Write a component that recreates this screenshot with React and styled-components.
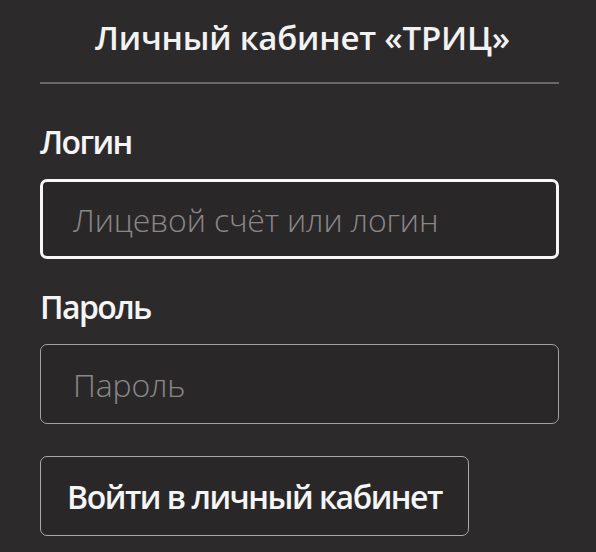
import React from "react";
import styled, { createGlobalStyle } from "styled-components";

const Global = createGlobalStyle`
  html, body { margin: 0; padding: 0; background: #2d2a2b; }
  body { font-family: "Open Sans", "Noto Sans", sans-serif; }
  * { box-sizing: border-box; }
`;

const Page = styled.div`
  width: 596px;
  min-height: 552px;
  padding: 18px 37px 0 40px;
  background: #2d2a2b;
  display: flex;
  flex-direction: column;
`;

const Title = styled.h1`
  margin: 0;
  font-size: 33px;
  line-height: 40px;
  font-weight: 600;
  letter-spacing: -0.2px;
  color: #f2f2f2;
  text-align: center;
  padding-left: 6px;
`;

const Divider = styled.hr`
  margin: 24px 0 0 0;
  border: none;
  height: 2px;
  background: #6b6869;
`;

const Form = styled.form`
  display: flex;
  flex-direction: column;
  margin-top: 38px;
`;

const Label = styled.label`
  display: block;
  font-size: 32px;
  line-height: 40px;
  font-weight: 600;
  letter-spacing: -1.6px;
  color: #f5f5f5;
  margin-top: ${(p) => p.$top || 0}px;
`;

const Input = styled.input`
  display: block;
  width: 100%;
  height: 80px;
  margin-top: 17px;
  padding: 0 0 0 ${(p) => (p.$focused ? 30 : 32)}px;
  background: #2a2728;
  border: ${(p) => (p.$focused ? "3px solid #f7f7f7" : "1.5px solid #a3a1a2")};
  border-radius: 7px;
  font-family: inherit;
  font-size: 32px;
  font-weight: 300;
  letter-spacing: -0.15px;
  color: #e0e0e0;
  outline: none;
  &::placeholder {
    color: #8a8788;
    opacity: 1;
  }
`;

const Button = styled.button`
  margin-top: 32px;
  width: 429px;
  height: 80px;
  background: #2a2728;
  border: 1.5px solid #aaa8a9;
  border-radius: 7px;
  font-family: inherit;
  font-size: 32px;
  font-weight: 600;
  letter-spacing: -1.5px;
  color: #f5f5f5;
  cursor: pointer;
  padding: 0;
`;

export default function App() {
  return (
    <>
      <Global />
      <Page>
        <Title>Личный кабинет «ТРИЦ»</Title>
        <Divider />
        <Form onSubmit={(e) => e.preventDefault()}>
          <Label htmlFor="login">Логин</Label>
          <Input id="login" $focused placeholder="Лицевой счёт или логин" />
          <Label htmlFor="pass" $top={28}>Пароль</Label>
          <Input id="pass" type="password" placeholder="Пароль" />
          <Button type="submit">Войти в личный кабинет</Button>
        </Form>
      </Page>
    </>
  );
}
